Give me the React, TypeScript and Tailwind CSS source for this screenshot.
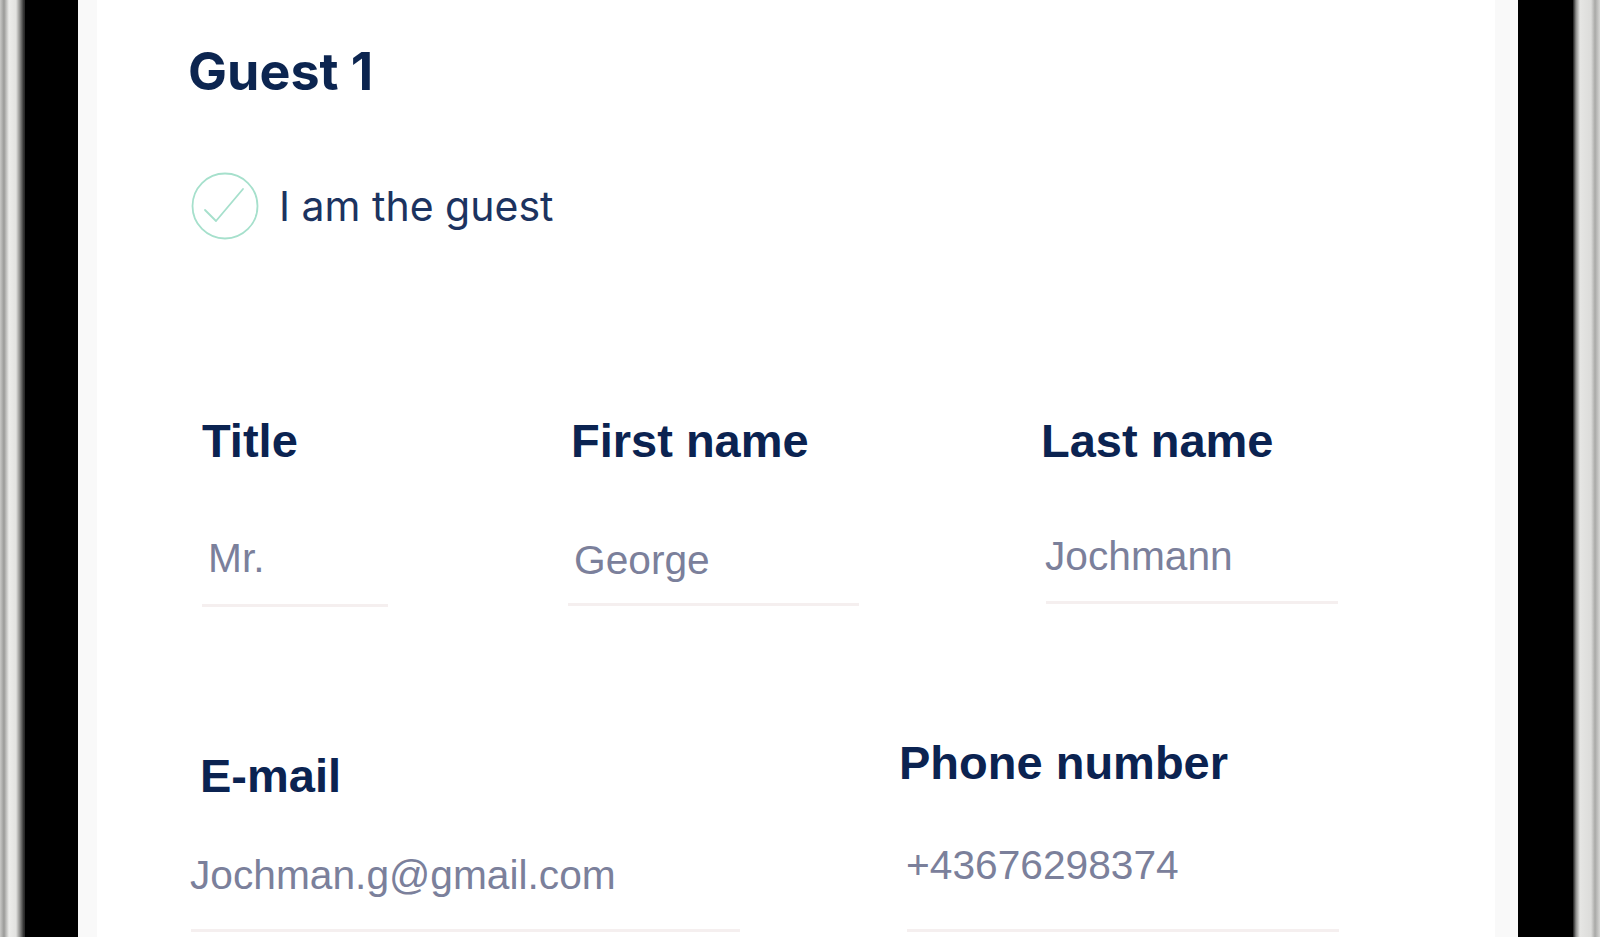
import React from 'react'

const labelCls = "font-['Liberation_Sans',Arial,sans-serif] text-[47px] font-bold leading-none text-[#0b2351] whitespace-nowrap"
const valueCls = "font-['Liberation_Sans',Arial,sans-serif] text-[40.7px] leading-none text-[#7b809b] whitespace-nowrap"

function CheckCircle() {
  return (
    <svg className="h-[68px] w-[68px] shrink-0" viewBox="0 0 68 68" fill="none">
      <circle cx="34" cy="34" r="32.5" stroke="#a6e0cc" strokeWidth="1.8" />
      <path d="M14 38 L25 49 L52 17" stroke="#a6e0cc" strokeWidth="1.8" strokeLinecap="round" strokeLinejoin="round" />
    </svg>
  )
}

export default function App() {
  return (
    <div className="flex h-[937px] w-full overflow-hidden bg-white">
      {/* left phone frame */}
      <div className="w-[25px] shrink-0 bg-[linear-gradient(90deg,#c9c9c7_0px,#9a9a98_4px,#ececea_9px,#e2e2e0_16px,#8c8c8a_20px,#2a2a2a_24px)]" />
      <div className="w-[53px] shrink-0 bg-black" />

      {/* screen */}
      <div className="flex flex-1 bg-[#f9f9f9] pl-[19px] pr-[23px]">
        <div className="flex-1 bg-white pl-[91px]">
          <h1 className="mt-[46px] font-['Inter',sans-serif] text-[52px] font-bold leading-none text-[#0c2550]">
            Guest 1
          </h1>

          <div className="mt-[74px] flex items-center">
            <div className="ml-[3px]">
              <CheckCircle />
            </div>
            <span className="ml-[20px] font-['Inter',sans-serif] text-[41px] font-normal leading-none text-[#1c3360]">
              I am the guest
            </span>
          </div>

          {/* row 1 */}
          <div className="mt-[177px] ml-[14px] flex items-start">
            <div className="w-[369px] shrink-0">
              <div className={labelCls}>Title</div>
              <div className={`${valueCls} mt-[74px] ml-[6px]`}>Mr.</div>
              <div className="mt-[25px] h-[3px] w-[186px] bg-[#f5efef]" />
            </div>
            <div className="w-[470px] shrink-0">
              <div className={labelCls}>First name</div>
              <div className={`${valueCls} mt-[76px] ml-[3px]`}>George</div>
              <div className="mt-[22px] -ml-[3px] h-[3px] w-[291px] bg-[#f5efef]" />
            </div>
            <div className="flex-1">
              <div className={labelCls}>Last name</div>
              <div className={`${valueCls} mt-[72px] ml-[4px]`}>Jochmann</div>
              <div className="mt-[24px] ml-[5px] h-[3px] w-[292px] bg-[#f5efef]" />
            </div>
          </div>

          {/* row 2 */}
          <div className="mt-[132px] ml-[12px] flex items-start">
            <div className="mt-[13px] w-[699px] shrink-0">
              <div className={labelCls}>E-mail</div>
              <div className={`${valueCls} mt-[56px] -ml-[10px]`}>Jochman.g@gmail.com</div>
              <div className="mt-[34px] -ml-[9px] h-[3px] w-[549px] bg-[#f5efef]" />
            </div>
            <div className="flex-1">
              <div className={labelCls}>Phone number</div>
              <div className={`${valueCls} mt-[59px] ml-[7px]`}>+43676298374</div>
              <div className="mt-[44px] ml-[8px] h-[3px] w-[432px] bg-[#f5efef]" />
            </div>
          </div>
        </div>
      </div>

      {/* right phone frame */}
      <div className="w-[55px] shrink-0 bg-black" />
      <div className="w-[27px] shrink-0 bg-[linear-gradient(90deg,#1a1a1a_0px,#8d8d8b_3px,#e6e6e4_7px,#dcdcda_18px,#a9a9a7_22px,#d6d6d4_27px)]" />
    </div>
  )
}
